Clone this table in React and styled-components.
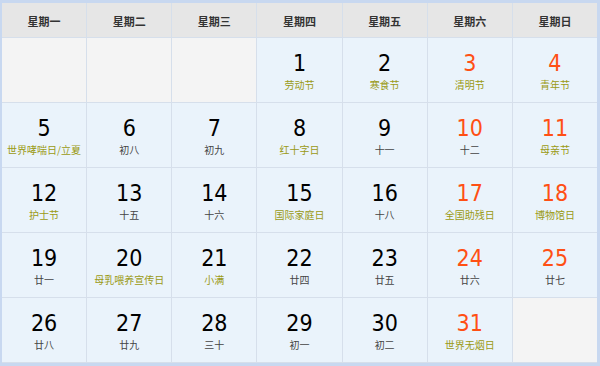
import React from "react";
import styled, { createGlobalStyle } from "styled-components";

const Global = createGlobalStyle`
  html, body { margin: 0; padding: 0; background: #fff; }
  body { font-family: "Noto Sans CJK SC", "Noto Sans", sans-serif; }
`;

const Frame = styled.div`
  width: 600px;
  height: 366px;
  box-sizing: border-box;
  border-style: solid;
  border-color: #c8d8f0;
  border-width: 3px 3px 3px 2px;
  background: #d6dfeb;
`;

const Grid = styled.div`
  display: grid;
  grid-template-columns: repeat(7, 1fr);
  grid-template-rows: 34px repeat(5, 64px);
  gap: 1px;
  padding-bottom: 1px;
`;

const Head = styled.div`
  background: #e6e6e6;
  color: #333;
  font-size: 11px;
  font-weight: bold;
  display: flex;
  align-items: center;
  justify-content: center;
  padding-top: 2px;
`;

const Cell = styled.div`
  background: ${(p) => (p.$empty ? "#f4f4f4" : "#eaf3fb")};
  display: flex;
  flex-direction: column;
  align-items: center;
  padding-top: 11px;
`;

const Num = styled.div`
  font-family: "DejaVu Sans Condensed", "DejaVu Sans", sans-serif;
  font-size: 23px;
  line-height: 28px;
  color: ${(p) => (p.$weekend ? "#ff4f14" : "#000")};
`;

const Label = styled.div`
  font-size: 10px;
  line-height: 14px;
  margin-top: 1px;
  white-space: nowrap;
  color: ${(p) => (p.$fest ? "#9a9a14" : "#444")};
`;

const heads = ["星期一", "星期二", "星期三", "星期四", "星期五", "星期六", "星期日"];

const days = [
  null, null, null,
  [1, "劳动节", 1], [2, "寒食节", 1], [3, "清明节", 1], [4, "青年节", 1],
  [5, "世界哮喘日/立夏", 1], [6, "初八"], [7, "初九"], [8, "红十字日", 1], [9, "十一"], [10, "十二"], [11, "母亲节", 1],
  [12, "护士节", 1], [13, "十五"], [14, "十六"], [15, "国际家庭日", 1], [16, "十八"], [17, "全国助残日", 1], [18, "博物馆日", 1],
  [19, "廿一"], [20, "母乳喂养宣传日", 1], [21, "小满", 1], [22, "廿四"], [23, "廿五"], [24, "廿六"], [25, "廿七"],
  [26, "廿八"], [27, "廿九"], [28, "三十"], [29, "初一"], [30, "初二"], [31, "世界无烟日", 1], null,
];

export default function App() {
  return (
    <>
      <Global />
      <Frame>
        <Grid>
          {heads.map((h) => (
            <Head key={h}>{h}</Head>
          ))}
          {days.map((d, i) => {
            if (!d) return <Cell key={i} $empty />;
            const weekend = i % 7 >= 5;
            return (
              <Cell key={i}>
                <Num $weekend={weekend}>{d[0]}</Num>
                <Label $fest={!!d[2]}>{d[1]}</Label>
              </Cell>
            );
          })}
        </Grid>
      </Frame>
    </>
  );
}
